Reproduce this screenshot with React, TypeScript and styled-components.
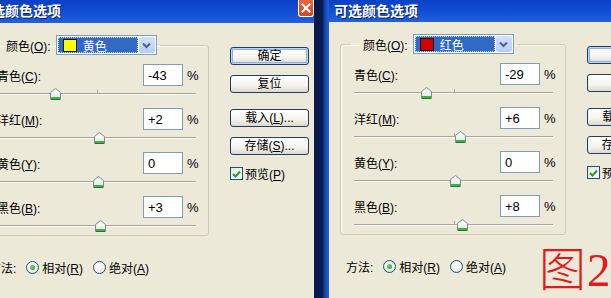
import React from 'react';
import styled, { createGlobalStyle } from 'styled-components';

const Global = createGlobalStyle`
  html, body { margin: 0; padding: 0; background: #0b1a48; }
  body { font-family: "Liberation Sans", "Noto Sans CJK SC", sans-serif; }
`;

const UI_FONT = `"Liberation Sans", "Noto Sans CJK SC", sans-serif`;

const Screen = styled.div`
  position: relative;
  width: 611px;
  height: 298px;
  overflow: hidden;
  display: flex;
  align-items: stretch;
  background: #0b1a48;
`;

const Divider = styled.div`
  flex: 0 0 15px;
  background: linear-gradient(to right, #0a1844 0, #0b1c52 55%, #1747b8 75%, #2160d8 100%);
`;

const Dialog = styled.section<{ $shift?: number }>`
  flex: 0 0 342px;
  width: 342px;
  margin-left: ${(p) => p.$shift ?? 0}px;
  display: flex;
  flex-direction: column;
  background: #ece9d8;
  color: #000;
  font: 12px ${UI_FONT};
`;

const TitleBar = styled.header<{ $h: number }>`
  flex: none;
  height: ${(p) => p.$h}px;
  display: flex;
  align-items: flex-start;
  justify-content: space-between;
  padding-left: 5px;
  background: linear-gradient(to bottom, #0b3fc6 0%, #1250d4 55%, #2260dc 100%);
  color: #fff;
  font: bold 14px "Noto Sans CJK SC", sans-serif;
  line-height: 20px;
  text-shadow: 1px 1px 0 #0a1f6a;
`;

const CloseBtn = styled.div`
  width: 16px;
  height: 18px;
  margin: -1px 0 0 0;
  box-sizing: border-box;
  border: 1px solid #fff;
  border-top: none;
  border-radius: 0 0 3px 3px;
  background: linear-gradient(to bottom, #e96a3f, #d8461f);
  display: flex;
  align-items: center;
  justify-content: center;
`;

const Body = styled.div`
  flex: 1;
  display: flex;
  gap: 21px;
  padding: 12px 0 0 11px;
`;

const Main = styled.div`
  width: 226px;
  display: flex;
  flex-direction: column;
`;

const Group = styled.fieldset`
  margin: 0;
  min-width: 0;
  padding: 9px 12px 3px 13px;
  border: 1px solid #cdc9b8;
  border-radius: 3px;
  box-shadow: inset 1px 1px 0 #fbfaf5;
  display: flex;
  flex-direction: column;
  gap: 8px;
`;

const Legend = styled.legend`
  margin-left: -3px;
  padding: 0 3px 0 12px;
  height: 20px;
  display: flex;
  align-items: center;
  gap: 5px;
`;

const Combo = styled.div`
  width: 101px;
  height: 20px;
  box-sizing: border-box;
  border: 1px solid #7f9db9;
  background: #fff;
  padding: 1px;
  display: flex;
`;

const ComboField = styled.div`
  flex: 1;
  display: flex;
  align-items: center;
  gap: 6px;
  padding-left: 5px;
  background: #316ac5;
  outline: 1px dotted #c9d6ee;
  outline-offset: -1px;
  color: #fff;
`;

const Swatch = styled.span<{ $color: string }>`
  width: 14px;
  height: 13px;
  box-sizing: border-box;
  border: 1px solid #1a1a1a;
  background: ${(p) => p.$color};
`;

const ComboButton = styled.div`
  width: 16px;
  margin-left: 1px;
  border-radius: 2px;
  background: linear-gradient(to bottom, #d3e0fd, #b7cdf8);
  display: flex;
  align-items: center;
  justify-content: center;
`;

const Channel = styled.div`
  display: flex;
  flex-direction: column;
`;

const ChannelHead = styled.div`
  height: 22px;
  display: flex;
  align-items: center;
`;

const ChannelLabel = styled.span`
  flex: 1;
`;

const NumBox = styled.input`
  width: 40px;
  height: 22px;
  box-sizing: border-box;
  margin: 0 4px 0 0;
  padding: 0 0 0 4px;
  border: 1px solid #7f9db9;
  background: #fff;
  font: 13px ${UI_FONT};
  color: #000;
  outline: none;
`;

const Percent = styled.span`
  width: 9px;
  font: 13px ${UI_FONT};
`;

const Track = styled.div`
  position: relative;
  height: 14px;
  &::before {
    content: '';
    position: absolute;
    left: 0;
    right: 0;
    top: 7px;
    height: 1px;
    background: #a8a69b;
    box-shadow: 0 1px 0 #fdfdfa;
  }
`;

const Tick = styled.span`
  position: absolute;
  left: 50%;
  top: 4px;
  width: 1px;
  height: 4px;
  background: #a8a69b;
`;

const Thumb = styled.svg`
  position: absolute;
  top: 2px;
  width: 11px;
  height: 12px;
`;

const MethodRow = styled.div`
  height: 20px;
  margin-top: 21px;
  padding-left: 6px;
  display: flex;
  align-items: center;
  gap: 10px;
`;

const RadioOption = styled.label`
  display: flex;
  align-items: center;
  gap: 3px;
`;

const RadioCircle = styled.span<{ $on?: boolean }>`
  width: 13px;
  height: 13px;
  box-sizing: border-box;
  border-radius: 50%;
  border: 1px solid #1c5180;
  background: radial-gradient(circle at 40% 35%, #ffffff 0%, #f0efe8 55%, #d8d6cc 100%);
  display: flex;
  align-items: center;
  justify-content: center;
  &::after {
    content: '';
    display: ${(p) => (p.$on ? 'block' : 'none')};
    width: 5px;
    height: 5px;
    border-radius: 50%;
    background: radial-gradient(circle at 35% 35%, #6fd66f, #1f9a1f);
  }
`;

const Side = styled.div`
  width: 79px;
  display: flex;
  flex-direction: column;
  padding-top: 12px;
`;

const Button = styled.div<{ $default?: boolean; $gap?: number }>`
  height: 18px;
  box-sizing: border-box;
  margin-bottom: ${(p) => p.$gap ?? 10}px;
  border: 1px solid #1e3d6b;
  border-radius: 3px;
  background: linear-gradient(to bottom, #ffffff 0%, #f4f3ee 60%, #dcd8cc 100%);
  box-shadow: ${(p) => (p.$default ? 'inset 0 0 0 1px #bcd4f6, inset 0 0 0 2px #8fb0e6' : 'none')};
  display: flex;
  align-items: center;
  justify-content: center;
  line-height: 1;
`;

const CheckRow = styled.label`
  margin-top: 10px;
  display: flex;
  align-items: center;
  gap: 2px;
`;

const CheckBox = styled.span`
  width: 13px;
  height: 13px;
  box-sizing: border-box;
  border: 1px solid #1c5180;
  background: linear-gradient(135deg, #e6e4dc, #ffffff);
  display: flex;
  align-items: center;
  justify-content: center;
`;

const Stamp = styled.div`
  position: absolute;
  left: 539px;
  top: 246px;
  color: #e3191b;
  font: 300 47px "Liberation Serif", "Noto Sans CJK SC", serif;
  line-height: 48px;
  letter-spacing: 1px;
  white-space: nowrap;
`;

type ChannelData = { name: string; key: string; value: number };

const Key = ({ k }: { k: string }) => (
  <>
    (<u>{k}</u>)
  </>
);

const Slider = ({ value }: { value: number }) => {
  const pct = ((value + 100) / 200) * 100;
  return (
    <Track>
      <Tick />
      <Thumb viewBox="0 0 11 12" style={{ left: `calc(${pct}% - 4px)` }}>
        <defs>
          <linearGradient id="thumbFill" x1="0" y1="0" x2="0" y2="1">
            <stop offset="0" stopColor="#ffffff" />
            <stop offset="1" stopColor="#e4e3dc" />
          </linearGradient>
        </defs>
        <path d="M0.5 4.5 L5.5 0.5 L10.5 4.5 V11.5 H0.5 Z" fill="url(#thumbFill)" stroke="#7d8d9c" />
        <rect x="1" y="9" width="9" height="2" fill="#3cb43c" />
        <rect x="1" y="11" width="9" height="1" fill="#1e7d1e" />
      </Thumb>
    </Track>
  );
};

const SelectiveColor = ({
  shift,
  titleH,
  title,
  colorName,
  swatch,
  channels,
  showClose,
}: {
  shift?: number;
  titleH: number;
  title: string;
  colorName: string;
  swatch: string;
  channels: ChannelData[];
  showClose?: boolean;
}) => (
  <Dialog $shift={shift}>
    <TitleBar $h={titleH}>
      <span>{title}</span>
      {showClose && (
        <CloseBtn>
          <svg width="10" height="10" viewBox="0 0 10 10">
            <path d="M1.5 1.5 L8.5 8.5 M8.5 1.5 L1.5 8.5" stroke="#fff" strokeWidth="2" strokeLinecap="square" />
          </svg>
        </CloseBtn>
      )}
    </TitleBar>
    <Body>
      <Main>
        <Group>
          <Legend>
            <span>
              颜色<Key k="O" />:
            </span>
            <Combo>
              <ComboField>
                <Swatch $color={swatch} />
                <span>{colorName}</span>
              </ComboField>
              <ComboButton>
                <svg width="9" height="7" viewBox="0 0 9 7">
                  <path d="M1 1.5 L4.5 5 L8 1.5" fill="none" stroke="#4d6185" strokeWidth="2" />
                </svg>
              </ComboButton>
            </Combo>
          </Legend>
          {channels.map((c) => (
            <Channel key={c.key}>
              <ChannelHead>
                <ChannelLabel>
                  {c.name}
                  <Key k={c.key} />:
                </ChannelLabel>
                <NumBox readOnly value={c.value > 0 ? `+${c.value}` : `${c.value}`} />
                <Percent>%</Percent>
              </ChannelHead>
              <Slider value={c.value} />
            </Channel>
          ))}
        </Group>
        <MethodRow>
          <span>方法:</span>
          <RadioOption>
            <RadioCircle $on />
            <span>
              相对<Key k="R" />
            </span>
          </RadioOption>
          <RadioOption>
            <RadioCircle />
            <span>
              绝对<Key k="A" />
            </span>
          </RadioOption>
        </MethodRow>
      </Main>
      <Side>
        <Button $default>确定</Button>
        <Button $gap={16}>复位</Button>
        <Button>
          载入<Key k="L" />...
        </Button>
        <Button $gap={0}>
          存储<Key k="S" />...
        </Button>
        <CheckRow>
          <CheckBox>
            <svg width="9" height="8" viewBox="0 0 9 8">
              <path d="M1 4 L3.5 6.5 L8 1.5" fill="none" stroke="#21a121" strokeWidth="2" />
            </svg>
          </CheckBox>
          <span>
            预览<Key k="P" />
          </span>
        </CheckRow>
      </Side>
    </Body>
  </Dialog>
);

export default function App() {
  return (
    <Screen>
      <Global />
      <SelectiveColor
        shift={-28}
        titleH={23}
        title="可选颜色选项"
        colorName="黄色"
        swatch="#ffff00"
        showClose
        channels={[
          { name: '青色', key: 'C', value: -43 },
          { name: '洋红', key: 'M', value: 2 },
          { name: '黄色', key: 'Y', value: 0 },
          { name: '黑色', key: 'B', value: 3 },
        ]}
      />
      <Divider />
      <SelectiveColor
        titleH={22}
        title="可选颜色选项"
        colorName="红色"
        swatch="#d40000"
        channels={[
          { name: '青色', key: 'C', value: -29 },
          { name: '洋红', key: 'M', value: 6 },
          { name: '黄色', key: 'Y', value: 0 },
          { name: '黑色', key: 'B', value: 8 },
        ]}
      />
      <Stamp>图2</Stamp>
    </Screen>
  );
}
